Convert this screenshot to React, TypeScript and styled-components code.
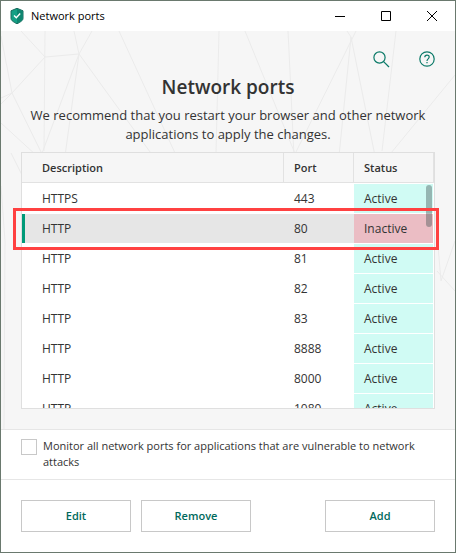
import React from "react";
import styled, { createGlobalStyle, css } from "styled-components";

const GlobalStyle = createGlobalStyle`
  *, *::before, *::after { box-sizing: border-box; }
  html, body { margin: 0; height: 100%; }
  #root { height: 100%; }
  body {
    font-family: "Open Sans", "Noto Sans", sans-serif;
    font-size: 11px;
    line-height: 16px;
    color: #333;
    background: #fff;
  }
  button, input { font: inherit; }
`;

const Window = styled.div`
  display: flex;
  flex-direction: column;
  min-height: 100%;
  border: 1px solid #6a796e;
  background: #fff;
`;

const TitleBar = styled.header`
  display: flex;
  align-items: center;
  height: 30px;
  padding-left: 9px;
  background: #fff;
`;

const WindowTitle = styled.span`
  flex: 1;
  margin-left: 7px;
  color: #000;
`;

const CaptionButton = styled.button`
  display: flex;
  align-items: center;
  justify-content: center;
  width: 46px;
  height: 30px;
  padding: 0;
  border: 0;
  background: none;
`;

const Main = styled.main`
  position: relative;
  display: flex;
  flex-direction: column;
  flex: 1;
  padding: 16px 20px 20px;
  background: #f6f6f6;
  border-bottom: 1px solid #e6e6e6;
`;

const Backdrop = styled.svg`
  position: absolute;
  top: 0;
  left: 0;
  pointer-events: none;
`;

const Tools = styled.div`
  position: relative;
  display: flex;
  justify-content: flex-end;
  gap: 22px;
  margin-right: -4px;
`;

const IconButton = styled.button`
  display: flex;
  align-items: center;
  justify-content: center;
  width: 24px;
  height: 24px;
  padding: 0;
  border: 0;
  background: none;
`;

const Intro = styled.div`
  position: relative;
  text-align: center;
  margin-bottom: 8px;
`;

const Heading = styled.h1`
  margin: 3px 0 6px;
  font-size: 19px;
  line-height: 26px;
  font-weight: 600;
`;

const Lead = styled.p`
  margin: 0 -8px;
  font-size: 13px;
  line-height: 19px;
`;

const TableArea = styled.div`
  position: relative;
  flex: 1 0 257px;
  height: 257px;
`;

const TableFrame = styled.div`
  height: 100%;
  overflow: hidden;
  border: 1px solid #dfdfdf;
  background: #fff;
`;

const Table = styled.table`
  width: 100%;
  table-layout: fixed;
  border-collapse: separate;
  border-spacing: 0;
`;

const HeadCell = styled.th<{ $width?: number }>`
  width: ${(p) => (p.$width ? `${p.$width}px` : "auto")};
  height: 30px;
  padding: 0 10px;
  text-align: left;
  font-weight: 600;
  background: #f6f6f6;
  border-right: 1px solid #e2e2e2;
  border-bottom: 1px solid #e2e2e2;

  &:first-child { padding-left: 20px; }
`;

type Status = "Active" | "Inactive";

const Row = styled.tr<{ $selected: boolean }>`
  td { background: ${(p) => (p.$selected ? "#e6e6e6" : "#fff")}; }
  td:first-child {
    box-shadow: ${(p) => (p.$selected ? "inset 3px 0 #009a78" : "none")};
  }
`;

const cell = css`
  height: 30px;
  padding: 0 10px;
  border-top: 1px solid #fff;
  font-size: 12px;
`;

const Cell = styled.td`
  ${cell}
  &:first-child { padding-left: 20px; }
`;

const StatusCell = styled.td<{ $status: Status }>`
  ${cell}
  border-right: 1px solid #fff;
  && { background: ${(p) => (p.$status === "Active" ? "#d0fbf4" : "#ebbdc4")}; }
`;

const ScrollThumb = styled.div`
  position: absolute;
  top: 33px;
  right: 3px;
  width: 6px;
  height: 42px;
  border-radius: 3px;
  background: rgba(60, 80, 80, 0.4);
`;

const Callout = styled.div`
  position: absolute;
  top: 56px;
  left: -8px;
  right: -4px;
  height: 42px;
  border: 3px solid #ff4141;
  pointer-events: none;
`;

const Option = styled.label`
  display: flex;
  align-items: flex-start;
  gap: 6px;
  min-height: 50px;
  padding: 8px 20px 9px;
  border-bottom: 1px solid #e6e6e6;
`;

const OptionText = styled.span`
  flex: 1;
  margin-right: -8px;
`;

const Checkbox = styled.input`
  appearance: none;
  flex: none;
  width: 16px;
  height: 16px;
  margin: 1px 0 0;
  border: 1px solid #c8c8c8;
  background: #fff;

  &:checked { background: #00806a; }
`;

const Footer = styled.footer`
  display: flex;
  gap: 10px;
  padding: 20px;
`;

const Button = styled.button<{ $end?: boolean }>`
  width: 110px;
  height: 32px;
  padding: 0;
  margin-left: ${(p) => (p.$end ? "auto" : "0")};
  border: 1px solid #c8c8c8;
  background: #fff;
  color: #00695c;
  font-weight: 600;
`;

const rows: { description: string; port: string; status: Status }[] = [
  { description: "HTTPS", port: "443", status: "Active" },
  { description: "HTTP", port: "80", status: "Inactive" },
  { description: "HTTP", port: "81", status: "Active" },
  { description: "HTTP", port: "82", status: "Active" },
  { description: "HTTP", port: "83", status: "Active" },
  { description: "HTTP", port: "8888", status: "Active" },
  { description: "HTTP", port: "8000", status: "Active" },
  { description: "HTTP", port: "1080", status: "Active" },
];

const ShieldIcon = () => (
  <svg width="14" height="16" viewBox="0 0 14 16" aria-hidden="true">
    <path d="M7 0.3 13 2.8V10.5C13 12.5 10 14.3 7 15.8 4 14.3 1 12.5 1 10.5V2.8Z" fill="#14a085" stroke="#1d6b5e" />
    <path d="M7 0.8 12.5 3.2V10.5C12.5 12.2 9.5 14 7 15.2Z" fill="#0f8570" />
    <path d="M4 7.6 6.3 9.8 10.2 5.6" fill="none" stroke="#fff" strokeWidth="1.4" />
  </svg>
);

export default function App() {
  const [selected, setSelected] = React.useState(1);
  return (
    <>
      <GlobalStyle />
      <Window>
        <TitleBar>
          <ShieldIcon />
          <WindowTitle>Network ports</WindowTitle>
          <CaptionButton aria-label="Minimize">
            <svg width="10" height="10"><path d="M0 5.5H10" stroke="#000" /></svg>
          </CaptionButton>
          <CaptionButton aria-label="Maximize">
            <svg width="10" height="10"><path d="M.5 .5H9.5V9.5H.5Z" fill="none" stroke="#000" /></svg>
          </CaptionButton>
          <CaptionButton aria-label="Close">
            <svg width="10" height="10"><path d="M0 0 10 10M10 0 0 10" stroke="#000" /></svg>
          </CaptionButton>
        </TitleBar>
        <Main>
          <Backdrop width="454" height="398" fill="none" stroke="#ebebeb" aria-hidden="true">
            <path d="M20 0 44 26 78 23 91 0M73 0 78 23M44 0 43 120M44 26 11 62 0 73M0 5 11 62 42 125M11 62 0 67M78 23 40 125M78 23 64 125M78 23 152 125M118 0 174 122M218 0 215 122M0 92 36 125M10 122 22 146M244 0 295 125M287 0 293 125 355 0M346 0 350 6 374 125M350 6 338 125M395 0 381 120M454 44 390 122" />
            <path d="M454 210 440 250 434 180M454 260 436 240M0 155 4 210 3 398" />
          </Backdrop>
          <Tools>
            <IconButton aria-label="Search">
              <svg width="18" height="18" fill="none" stroke="#0b7a68" strokeWidth="1.2">
                <circle cx="7.5" cy="7.5" r="5.6" /><path d="M11.6 11.6 17 17" />
              </svg>
            </IconButton>
            <IconButton aria-label="Help">
              <svg width="16" height="16" fill="none" stroke="#0b7a68" strokeWidth="1.2">
                <circle cx="8" cy="8" r="7.2" />
                <path d="M5.8 6.3C5.8 3.4 10.2 3.4 10.2 6.1 10.2 7.8 8 7.9 8 9.9M8 11V12.3" />
              </svg>
            </IconButton>
          </Tools>
          <Intro>
            <Heading>Network ports</Heading>
            <Lead>We recommend that you restart your browser and other network applications to apply the changes.</Lead>
          </Intro>
          <TableArea>
            <TableFrame>
              <Table>
                <thead>
                  <tr>
                    <HeadCell>Description</HeadCell>
                    <HeadCell $width={70}>Port</HeadCell>
                    <HeadCell $width={80}>Status</HeadCell>
                  </tr>
                </thead>
                <tbody>
                  {rows.map((row, i) => (
                    <Row key={row.port} $selected={i === selected} onClick={() => setSelected(i)}>
                      <Cell>{row.description}</Cell>
                      <Cell>{row.port}</Cell>
                      <StatusCell $status={row.status}>{row.status}</StatusCell>
                    </Row>
                  ))}
                </tbody>
              </Table>
            </TableFrame>
            <ScrollThumb />
            <Callout />
          </TableArea>
        </Main>
        <Option>
          <Checkbox type="checkbox" />
          <OptionText>Monitor all network ports for applications that are vulnerable to network attacks</OptionText>
        </Option>
        <Footer>
          <Button>Edit</Button>
          <Button>Remove</Button>
          <Button $end>Add</Button>
        </Footer>
      </Window>
    </>
  );
}
